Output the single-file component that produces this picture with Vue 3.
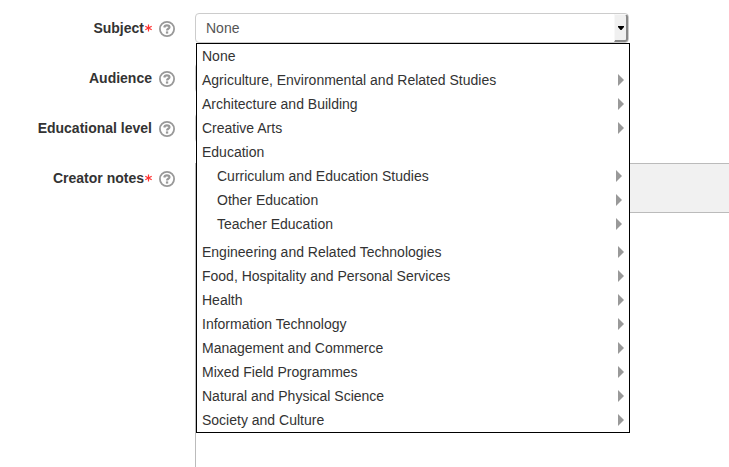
<script setup>
import { ref } from 'vue'

const subject = ref('None')
const open = ref(true)
const notes = ref('')

const fields = [
  { id: 'subject', label: 'Subject', required: true },
  { id: 'audience', label: 'Audience', required: false },
  { id: 'level', label: 'Educational level', required: false },
  { id: 'notes', label: 'Creator notes', required: true },
]

const subjects = [
  { name: 'None' },
  { name: 'Agriculture, Environmental and Related Studies', more: true },
  { name: 'Architecture and Building', more: true },
  { name: 'Creative Arts', more: true },
  {
    name: 'Education',
    children: ['Curriculum and Education Studies', 'Other Education', 'Teacher Education'],
  },
  { name: 'Engineering and Related Technologies', more: true },
  { name: 'Food, Hospitality and Personal Services', more: true },
  { name: 'Health', more: true },
  { name: 'Information Technology', more: true },
  { name: 'Management and Commerce', more: true },
  { name: 'Mixed Field Programmes', more: true },
  { name: 'Natural and Physical Science', more: true },
  { name: 'Society and Culture', more: true },
]
</script>

<template>
  <form class="form" @submit.prevent>
    <div v-for="field in fields" :key="field.id" class="row" :class="{ grow: field.id === 'notes' }">
      <div class="caption">
        <label :for="field.id" class="label">
          {{ field.label }}
          <svg v-if="field.required" class="required" viewBox="0 0 8 8" width="8" height="8" role="img" aria-label="Required">
            <path d="M4.500 .5v7M1.300 2.200l6.400 3.600M7.700 2.200L1.300 5.800" fill="none" stroke="#f33" stroke-width="1.200" />
          </svg>
        </label>
        <button type="button" class="help" :aria-label="'Help with ' + field.label">
          <svg viewBox="0 0 16 16" width="16" height="16" aria-hidden="true">
            <circle cx="8" cy="8" r="7.1" fill="none" stroke="#999" stroke-width="1.8" />
            <path d="M5.300 6.500C5.500 4.900 6.500 4.300 7.900 4.300c1.500 0 2.600.7 2.600 1.900 0 1.700-2.500 1.500-2.500 3.300" fill="none" stroke="#999" stroke-width="2.200" />
            <rect x="6.900" y="10.400" width="2.300" height="2.200" fill="#999" />
          </svg>
        </button>
      </div>

      <div v-if="field.id === 'notes'" class="editor">
        <div class="toolbar"></div>
        <textarea id="notes" v-model="notes"></textarea>
      </div>

      <div v-else-if="field.id === 'subject'" class="combo">
        <select id="subject" v-model="subject" class="select" @mousedown.prevent="open = !open">
          <option v-for="item in subjects" :key="item.name">{{ item.name }}</option>
        </select>
        <span class="drop" aria-hidden="true">
          <svg viewBox="0 0 6 4" width="6" height="4"><path d="M0 0h6v1L3.500 4h-1L0 1z" fill="#000" /></svg>
        </span>
        <ul v-if="open" class="menu">
          <li v-for="item in subjects" :key="item.name">
            <button type="button" class="item" @click="subject = item.name">
              {{ item.name }}
              <svg v-if="item.more" class="arrow" viewBox="0 0 6 12" width="6" height="12"><path d="M0 0l6 6-6 6z" fill="#999" /></svg>
            </button>
            <ul v-if="item.children" class="children">
              <li v-for="child in item.children" :key="child">
                <button type="button" class="item">
                  {{ child }}
                  <svg class="arrow" viewBox="0 0 6 12" width="6" height="12"><path d="M0 0l6 6-6 6z" fill="#999" /></svg>
                </button>
              </li>
            </ul>
          </li>
        </ul>
      </div>

      <div v-else class="combo">
        <select :id="field.id" class="select"></select>
      </div>
    </div>
  </form>
</template>

<style>
body {
  background: #fff;
}
</style>

<style scoped>
* {
  box-sizing: border-box;
}

.form {
  display: flex;
  flex-direction: column;
  gap: 20px;
  min-height: 100vh;
  padding-top: 13px;
  font: 14px/20px "Liberation Sans", Arial, sans-serif;
  color: #333;
}

.row {
  display: grid;
  grid-template-columns: 175px minmax(0, 1fr);
  column-gap: 20px;
  min-height: 30px;
}

.grow {
  flex: 1;
}

.caption {
  display: flex;
  align-items: center;
  justify-content: flex-end;
  gap: 7px;
  height: 30px;
  font-weight: bold;
}

.label {
  display: flex;
  align-items: center;
}

button {
  padding: 0;
  border: 0;
  background: none;
  color: inherit;
  font: inherit;
}

.help {
  display: flex;
  padding-top: 2px;
}

.combo {
  position: relative;
  max-width: 434px;
  height: 30px;
}

.select {
  display: block;
  width: 100%;
  height: 30px;
  padding: 0 10px;
  border: 1px solid #ccc;
  border-radius: 4px;
  background: #fff;
  color: #555;
  font: inherit;
  appearance: none;
}

.drop {
  position: absolute;
  top: 1px;
  right: 1px;
  bottom: 1px;
  display: flex;
  align-items: center;
  justify-content: center;
  width: 14px;
  border: solid;
  border-width: 1px 2px 2px 1px;
  border-color: #f8f8f8 #888 #888 #f8f8f8;
  border-radius: 0 3px 3px 0;
  background: #f0f0f0;
  pointer-events: none;
}

.menu {
  position: absolute;
  z-index: 1;
  top: 30px;
  left: 1px;
  width: 100%;
  border: 1px solid #000;
  background: #fff;
}

ul {
  margin: 0;
  padding: 0;
  list-style: none;
}

.item {
  display: flex;
  align-items: center;
  justify-content: space-between;
  width: 100%;
  height: 24px;
  padding: 0 5px;
  text-align: left;
}

.children {
  padding: 0 2px 4px 15px;
}

.editor {
  display: flex;
  flex-direction: column;
  border-left: 1px solid #bbb;
}

.toolbar {
  height: 50px;
  border: solid #bbb;
  border-width: 1px 0;
  background: #f1f1f1;
}

textarea {
  flex: 1;
  width: 100%;
  padding: 5px;
  border: 0;
  background: #fff;
  font: inherit;
  resize: none;
}
</style>
